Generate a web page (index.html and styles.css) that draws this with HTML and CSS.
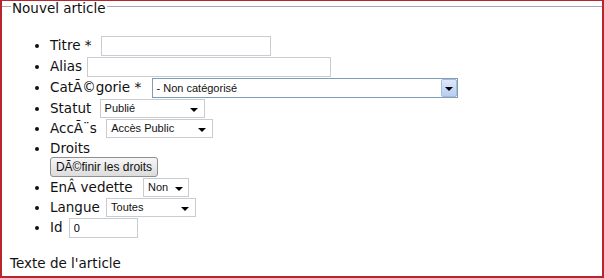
FILE: index.html
```html
<!DOCTYPE html>
<html>
<head>
    <title>Nouvel article</title>
    <link rel="stylesheet" href="styles.css">
</head>
<body>
<div class="frame">
    <fieldset class="article">
        <legend>Nouvel article</legend>
        <ul class="fields">
            <li>Titre * <input type="text" class="txt title"></li>
            <li>Alias <input type="text" class="txt alias"></li>
            <li>CatÃ©gorie *
                <span class="sel xp cat"><span class="val">- Non catégorisé</span><span class="btn"><i class="arrow"></i></span></span>
            </li>
            <li>Statut
                <span class="sel statut"><span class="val">Publié</span><i class="arrow"></i></span>
            </li>
            <li>AccÃ¨s
                <span class="sel acces"><span class="val">Accès Public</span><i class="arrow"></i></span>
            </li>
            <li>Droits<br>
                <button type="button" class="rights">DÃ©finir les droits</button>
            </li>
            <li>EnÂ vedette
                <span class="sel vedette"><span class="val">Non</span><i class="arrow"></i></span>
            </li>
            <li>Langue
                <span class="sel langue"><span class="val">Toutes</span><i class="arrow"></i></span>
            </li>
            <li>Id <input type="text" class="txt id" value="0"></li>
        </ul>
        <p class="texte">Texte de l'article</p>
    </fieldset>
</div>
</body>
</html>
```

FILE: styles.css
```css
body {
    margin: 0;
    font-family: 'DejaVu Sans', Verdana, sans-serif;
    font-size: 13.5px;
    color: #111;
    background: #fff;
}
.frame {
    box-sizing: border-box;
    height: 278px;
    border: 2px solid #b8262c;
    border-top-width: 1px;
    overflow: hidden;
}
.article {
    margin: 0;
    padding: 0 8px;
    border: none;
    border-top: 1px solid #a7a7b0;
}
.article legend {
    padding: 4px 1px 0 1px;
    margin-left: 1px;
    line-height: 6px;
}
.fields {
    margin: 25px 0 0 0;
    padding-left: 40px;
    line-height: 18px;
}
.txt {
    box-sizing: border-box;
    height: 20px;
    border: 1px solid #c9cdd2;
    font: 11px 'Liberation Sans', Arial, sans-serif;
    padding: 1px 4px;
    vertical-align: top;
    margin: 0 0 1px 0;
}
.title { width: 170px; margin-left: 5px; }
.alias { width: 244px; margin-left: 1px; }
.id { width: 69px; margin-left: 2px; }
.sel {
    display: inline-flex;
    align-items: center;
    box-sizing: border-box;
    height: 19px;
    border: 1px solid #c9cdd2;
    font: 11px 'Liberation Sans', Arial, sans-serif;
    line-height: 17px;
    vertical-align: top;
    margin: 0 0 1px 0;
    background: #fff;
}
.sel .val {
    flex: 1;
    padding-left: 4px;
}
.sel .arrow {
    width: 0;
    height: 0;
    border-left: 4px solid transparent;
    border-right: 4px solid transparent;
    border-top: 4px solid #000;
    margin: 2px 6px 0 0;
}
.xp {
    border-color: #7f9db9;
    height: 20px;
}
.xp .btn {
    box-sizing: border-box;
    display: flex;
    align-items: center;
    justify-content: center;
    width: 16px;
    height: 18px;
    border: 1px solid #a8bbd8;
    border-radius: 2px;
    background: linear-gradient(#dde8fb, #b8cdf2);
}
.xp .btn .arrow {
    margin: 2px 0 0 0;
}
.cat { width: 306px; margin-left: 6px; }
.statut { width: 105px; margin-left: 4px; }
.acces { width: 107px; margin-left: 5px; }
.vedette { width: 46px; margin-left: 6px; }
.vedette .arrow { margin-right: 5px; }
.langue { width: 90px; margin-left: 2px; }
.rights {
    box-sizing: border-box;
    width: 108px;
    height: 20px;
    margin: 0 0 1px 0;
    padding: 0;
    border: 1px solid #8e8f8f;
    border-radius: 3px;
    background: linear-gradient(#f6f6f6, #dcdcdc);
    font: 12px 'Liberation Sans', Arial, sans-serif;
    color: #111;
    vertical-align: top;
}
.texte {
    margin: 15px 0 0 0;
    line-height: 18px;
}
```
